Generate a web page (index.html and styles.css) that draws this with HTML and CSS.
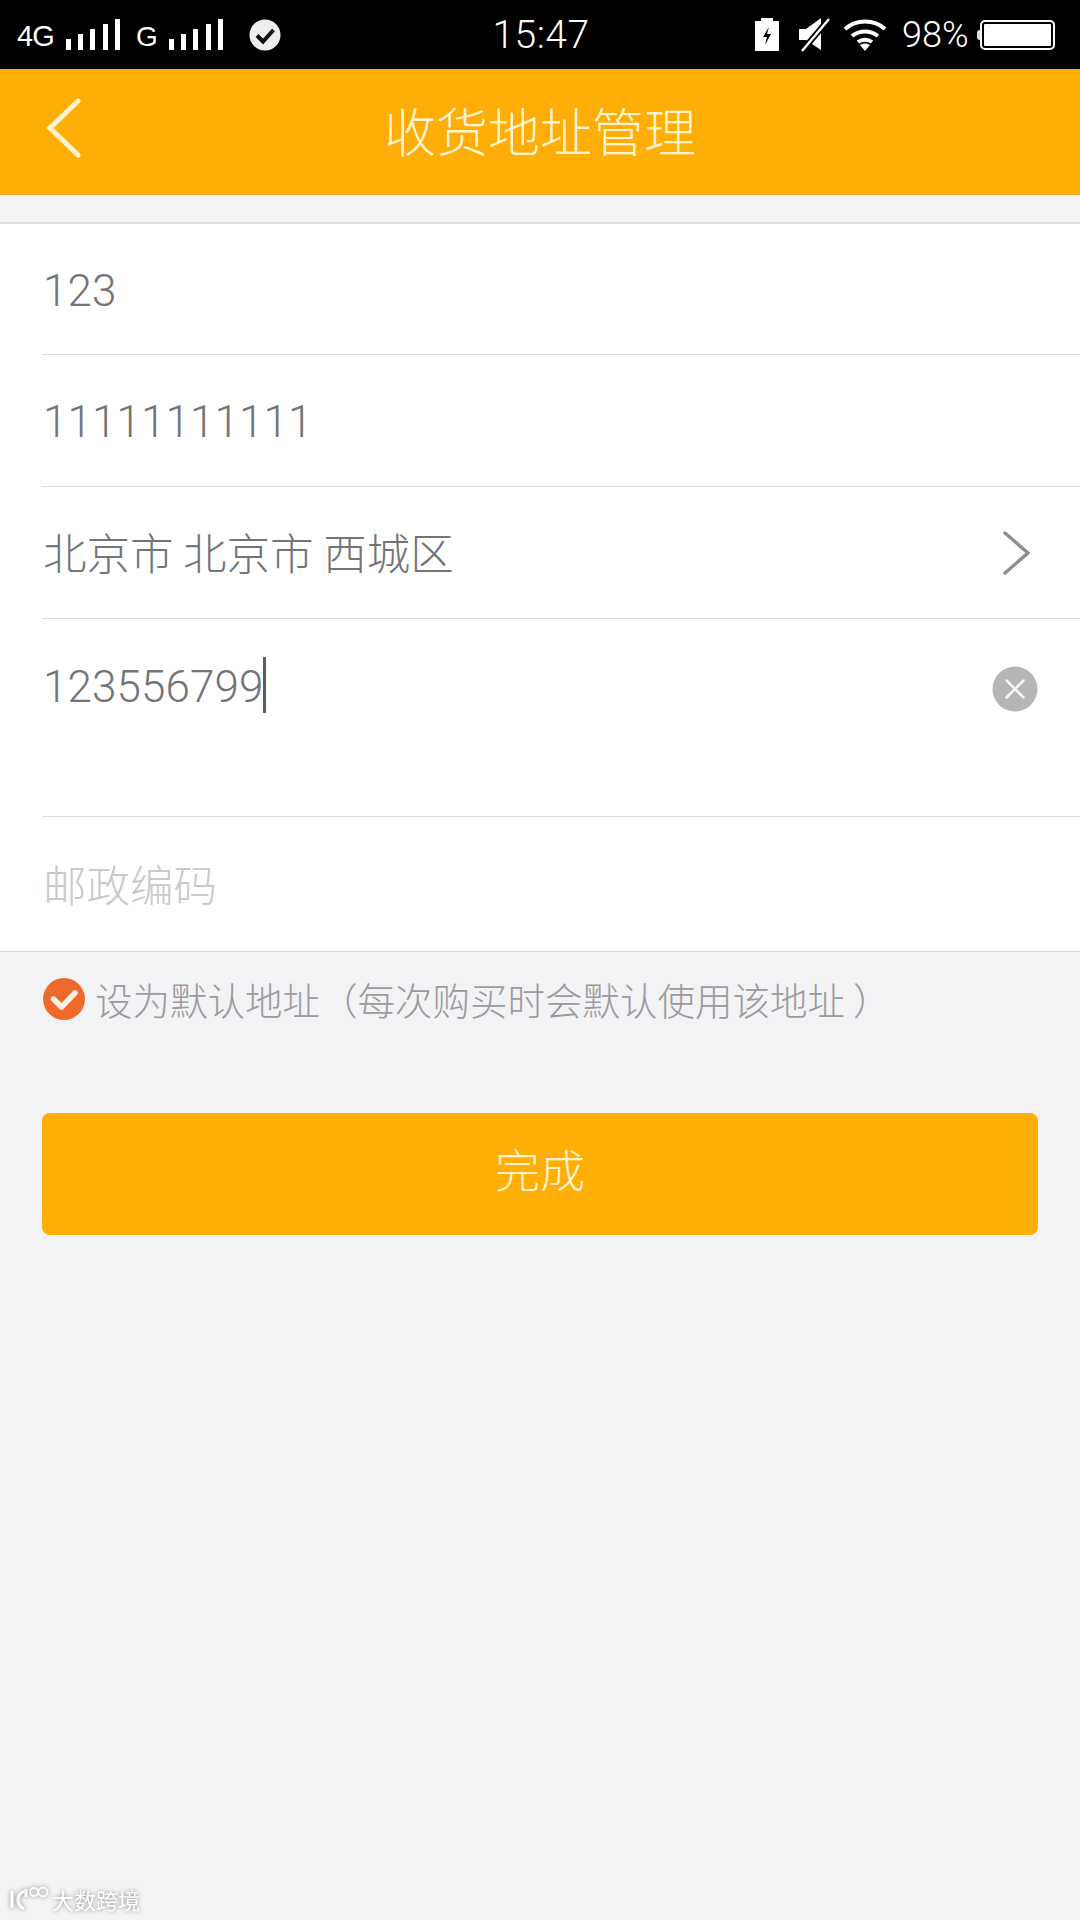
FILE: index.html
```html
<!DOCTYPE html>
<html lang="zh-CN">
<head>
    <meta charset="UTF-8">
    <meta name="viewport" content="width=device-width, initial-scale=1.0">
    <title>收货地址管理</title>
    <link rel="stylesheet" href="styles.css">
</head>
<body>
    <div id="container">
        <div class="statusBar">
            <div class="statusLeft">
                <span class="netText">4G</span>
                <svg class="signal" width="56" height="32" viewBox="0 0 56 32">
                    <path d="M1 20h5v11H1zM13 15h5v16h-5zM25 10h5v21h-5zM38 5h5v26h-5zM50 0h5v31h-5z" fill="#fff"/>
                </svg>
                <span class="netText netG">G</span>
                <svg class="signal" width="56" height="32" viewBox="0 0 56 32">
                    <path d="M1 20h5v11H1zM13 15h5v16h-5zM25 10h5v21h-5zM38 5h5v26h-5zM50 0h5v31h-5z" fill="#fff"/>
                </svg>
                <svg class="syncIcon" width="32" height="32" viewBox="0 0 32 32">
                    <circle cx="16" cy="16" r="15.5" fill="#eee"/>
                    <path d="M8 16.5l6 6L24.5 11" fill="none" stroke="#111" stroke-width="4"/>
                </svg>
            </div>
            <div class="statusTime">15:47</div>
            <div class="statusRight">
                <svg width="24" height="33" viewBox="0 0 24 33">
                    <path d="M0 3h6V0h12v3h6v33H0z" fill="#fff"/>
                    <path d="M14 9l-6 10h4l-2 8 6-11h-4z" fill="#000"/>
                </svg>
                <svg class="muteIcon" width="32" height="34" viewBox="0 0 32 34">
                    <path d="M0 11h7l15-11v32L7 22H0z" fill="#fff"/>
                    <path d="M3 33L30 1" stroke="#000" stroke-width="6"/>
                    <path d="M3 33L30 1" stroke="#fff" stroke-width="2.5"/>
                </svg>
                <svg class="wifiIcon" width="44" height="33" viewBox="0 0 44 33">
                    <path d="M2 11C13 1 31 1 42 11M9 18c8-6 18-6 26 0M15 24c4-3 10-3 14 0" fill="none" stroke="#fff" stroke-width="4"/>
                    <path d="M17 27c3-2 7-2 10 0l-5 6z" fill="#fff"/>
                </svg>
                <span class="batteryText">98%</span>
                <div class="battery">
                    <div class="batteryCap"></div>
                    <div class="batteryBody"></div>
                </div>
            </div>
        </div>

        <div class="header">
            <svg class="backIcon" width="38" height="60" viewBox="0 0 38 60">
                <path d="M34 3L6 30l28 27" fill="none" stroke="#fdf3cf" stroke-width="5" stroke-linecap="round"/>
            </svg>
            <h1 class="title">收货地址管理</h1>
        </div>

        <div class="form">
            <div class="row rowFirst">
                <span class="value">123</span>
            </div>
            <div class="row">
                <span class="value">11111111111</span>
            </div>
            <div class="row">
                <span class="value valueCn">北京市 北京市 西城区</span>
                <svg class="moreIcon" width="28" height="46" viewBox="0 0 28 46">
                    <path d="M3 3l23 20L3 43" fill="none" stroke="#8f8f92" stroke-width="3.5" stroke-linecap="round"/>
                </svg>
            </div>
            <div class="row rowTall">
                <span class="value">123556799<i class="caret"></i></span>
                <svg class="clearIcon" width="46" height="46" viewBox="0 0 46 46">
                    <circle cx="23" cy="23" r="22.5" fill="#b6b6b8"/>
                    <path d="M14.5 14.5l17 17M31.5 14.5l-17 17" stroke="#f6f6f6" stroke-width="2.5" stroke-linecap="round"/>
                </svg>
            </div>
            <div class="row rowLast">
                <span class="value valueCn placeholder">邮政编码</span>
            </div>
        </div>

        <div class="defaultRow">
            <svg class="checkIcon" width="42" height="42" viewBox="0 0 42 42">
                <circle cx="21" cy="21" r="21" fill="#ee6a2c"/>
                <path d="M10.5 21l8 8L32 15" fill="none" stroke="#fdeee2" stroke-width="5.5" stroke-linecap="round" stroke-linejoin="round"/>
            </svg>
            <span class="defaultText">设为默认地址（每次购买时会默认使用该地址<span class="parenClose">）</span></span>
        </div>

        <button type="button" class="doneButton">完成</button>

        <div class="watermark">
            <svg width="40" height="26" viewBox="0 0 40 26">
                <path d="M2 5v17M14 5C6 9 6 19 14 23M16 3v8" fill="none" stroke="#fff" stroke-width="3"/>
                <circle cx="24" cy="6" r="4" fill="none" stroke="#fff" stroke-width="1.8"/>
                <circle cx="33" cy="6" r="4.5" fill="none" stroke="#fff" stroke-width="1.8"/>
            </svg>
            <span class="watermarkText">大数跨境</span>
        </div>
    </div>
</body>
</html>
```

FILE: styles.css
```css
body {
    font-family: Roboto, "Noto Sans CJK SC", sans-serif;
    background-color: #f3f2f5;
    margin: 0;
    padding: 0;
}

#container {
    width: 1080px;
    height: 1920px;
    position: relative;
    overflow: hidden;
}

.statusBar {
    background-color: #000;
    color: #fff;
    height: 69px;
    box-sizing: border-box;
    padding: 0 27px 0 17px;
    display: flex;
    align-items: center;
    justify-content: space-between;
}

.statusLeft, .statusRight {
    width: 400px;
    display: flex;
    align-items: center;
}

.statusLeft {
    width: 412px;
}

.statusRight {
    justify-content: flex-end;
}

.netText {
    font-family: "Liberation Sans", sans-serif;
    font-size: 29px;
    width: 48px;
    letter-spacing: -1px;
    padding-top: 4px;
}

.netG {
    width: 32px;
    margin-left: 15px;
    font-size: 28px;
}

.syncIcon {
    margin-left: 25px;
}

.statusTime {
    font-size: 39px;
    font-weight: 300;
    letter-spacing: 0.5px;
}

.muteIcon {
    margin-left: 20px;
}

.wifiIcon {
    margin-left: 12px;
}

.batteryText {
    font-size: 36px;
    font-weight: 300;
    margin-left: 15px;
    width: 71px;
}

.battery {
    display: flex;
    align-items: center;
    margin-left: 4px;
}

.batteryCap {
    width: 4px;
    height: 10px;
    background-color: #ddd;
    border-radius: 3px 0 0 3px;
}

.batteryBody {
    width: 67px;
    height: 22px;
    margin-left: 1px;
    background-color: #fff;
    border: 2px solid #000;
    outline: 2px solid #fff;
    border-radius: 3px;
}

.header {
    background-color: #ffae07;
    height: 126px;
    display: flex;
    align-items: center;
    justify-content: center;
    position: relative;
    box-sizing: border-box;
    border-top: 1px solid #e8a63c;
    border-bottom: 1px solid #eeaa2e;
}

.backIcon {
    position: absolute;
    left: 44px;
    top: 28px;
}

.title {
    margin: 0;
    padding-bottom: 5px;
    font-size: 52px;
    font-weight: 300;
    color: #fdf3cf;
}

.form {
    margin-top: 27px;
    background-color: #fff;
    border-top: 2px solid #dedee0;
    padding-left: 42px;
}

.row {
    height: 131px;
    border-bottom: 1px solid #dcdcde;
    display: flex;
    align-items: center;
    justify-content: space-between;
    padding-right: 42px;
}

.rowFirst {
    height: 130px;
}

.rowTall {
    height: 197px;
    align-items: flex-start;
}

.rowTall .value {
    margin-top: 38px;
}

.rowLast {
    height: 134px;
    margin-left: -42px;
    padding-left: 42px;
    border-bottom-color: #d8d8da;
}

.value {
    margin-left: 1px;
    padding-top: 3px;
    font-size: 44px;
    line-height: 54px;
    font-weight: 300;
    letter-spacing: 0.1px;
    color: #747477;
}

.valueCn {
    padding-top: 7px;
    font-size: 43.5px;
    letter-spacing: 0;
    word-spacing: -1px;
}

.placeholder {
    color: #c9c9cc;
}

/* text cursor, sits over the end of the digits */
.caret {
    display: inline-block;
    width: 3px;
    height: 56px;
    margin: -2px 0 -4px -1px;
    vertical-align: middle;
    position: relative;
    top: -6px;
    background-color: #5c5c60;
}

.moreIcon {
    margin-right: 8px;
}

.clearIcon {
    margin-top: 47px;
}

.defaultRow {
    display: flex;
    align-items: flex-start;
    padding: 26px 42px 0 43px;
}

.checkIcon {
    flex-shrink: 0;
}

.defaultText {
    margin-left: 10px;
    font-size: 37.5px;
    line-height: 49px;
    font-weight: 300;
    color: #9b9b9e;
    white-space: nowrap;
}

.parenClose {
    margin-left: 8px;
}

.doneButton {
    display: block;
    width: 996px;
    height: 122px;
    margin: 86px 42px 0;
    border: none;
    border-radius: 8px;
    background-color: #ffae07;
    color: #fdf3cf;
    font-family: inherit;
    font-size: 45px;
    font-weight: 300;
    padding: 0 0 11px;
}

/* watermark sits over the page */
.watermark {
    position: absolute;
    left: 10px;
    bottom: 5px;
    display: flex;
    align-items: center;
    filter: drop-shadow(0 0 2px #8a8a8a);
}

.watermarkText {
    margin-left: 2px;
    font-size: 22px;
    color: #fff;
}
```
